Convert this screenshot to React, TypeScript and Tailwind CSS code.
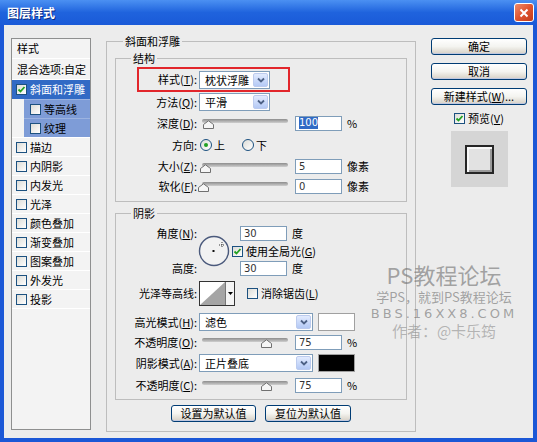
import React from 'react';

const cjk = "font-['Noto_Sans_CJK_SC','Noto_Sans',sans-serif]";
const latin = "font-['DejaVu_Sans','Liberation_Sans',sans-serif]";

function Acc({ text, k, colon = true }: { text: string; k?: string; colon?: boolean }) {
  return (
    <span className="whitespace-nowrap">
      {text}
      {k && (
        <>
          (<span className="underline">{k}</span>)
        </>
      )}
      {colon && ':'}
    </span>
  );
}

function Label({ text, k, w = 'w-[82px]' }: { text: string; k?: string; w?: string }) {
  return (
    <div className={`${w} shrink-0 text-right pr-[1px]`}>
      <Acc text={text} k={k} />
    </div>
  );
}

function Select({ value, w }: { value: string; w: string }) {
  return (
    <div className={`${w} ml-[1px] h-[18px] shrink-0 flex items-stretch border border-[#7f9db9] bg-white`}>
      <span className="flex-1 pl-[5px] leading-[16px]">{value}</span>
      <span className="w-[15px] m-[1px] flex items-center justify-center rounded-[2px] border border-[#bccbee] bg-gradient-to-b from-[#e2ebfe] to-[#b4c9f5]">
        <svg width="8" height="6" viewBox="0 0 8 6">
          <path d="M1 1.5 L4 4.5 L7 1.5" stroke="#4d6185" strokeWidth="1.8" fill="none" />
        </svg>
      </span>
    </div>
  );
}

function Slider({ pos }: { pos: number }) {
  return (
    <div className="relative w-[91px] h-[14px] ml-[1px] shrink-0">
      <div className="absolute left-[3px] right-[2px] top-[3px] h-[4px] rounded-full bg-gradient-to-b from-[#8d8d8d] to-[#cfcfcf]" />
      <svg className="absolute top-[4px]" style={{ left: pos }} width="11" height="9" viewBox="0 0 11 9">
        <path d="M0.5 8.5 V4.5 L5.5 0.8 L10.5 4.5 V8.5 Z" fill="#f6f6f6" stroke="#707070" />
      </svg>
    </div>
  );
}

function NumInput({ value, selected }: { value: string; selected?: boolean }) {
  return (
    <div className={`w-[47px] h-[15px] ml-[5px] shrink-0 border border-[#7f9db9] bg-white pl-[3px] flex items-center text-[10px] text-[#333] ${latin}`}>
      {selected ? <span className="bg-[#316ac5] text-white leading-[12px]">{value}</span> : value}
    </div>
  );
}

function Checkbox({ checked }: { checked?: boolean }) {
  return (
    <span className="w-[11px] h-[11px] shrink-0 border border-[#1c5180] bg-gradient-to-br from-[#dcdcd7] to-white flex items-center justify-center">
      {checked && (
        <svg width="9" height="9" viewBox="0 0 9 9">
          <path d="M1.5 4.5 L3.5 6.5 L7.5 2" stroke="#21a121" strokeWidth="1.8" fill="none" />
        </svg>
      )}
    </span>
  );
}

function Radio({ checked }: { checked?: boolean }) {
  return (
    <span className="w-[12px] h-[12px] shrink-0 rounded-full border border-[#1c5180] bg-gradient-to-br from-[#dcdcd7] to-white flex items-center justify-center">
      {checked && <span className="w-[4px] h-[4px] rounded-full bg-[#21a121]" />}
    </span>
  );
}

function Button({ children, w }: { children: React.ReactNode; w: string }) {
  return (
    <div className={`${w} h-[17px] shrink-0 flex items-center justify-center rounded-[3px] border border-[#003c74] bg-gradient-to-b from-white via-[#f4f4f0] to-[#d6d0c5] shadow-[inset_0_-1px_0_#c0c8e0] leading-none`}>
      {children}
    </div>
  );
}

const effects = ['描边', '内阴影', '内发光', '光泽', '颜色叠加', '渐变叠加', '图案叠加', '外发光', '投影'];

function StylePanel() {
  return (
    <div className="ml-[7px] mt-[13px] w-[80px] h-[392px] shrink-0 border border-[#8e8f8f] bg-[#f3f3f3]">
      <div className="h-[20px] pl-[5px] flex items-center border-b border-white">样式</div>
      <div className="h-[21px] pl-[5px] flex items-center border-b border-white">混合选项:自定</div>
      <div className="h-[19px] pl-[4px] flex items-center gap-[3px] bg-[#316ac5] text-white">
        <Checkbox checked />
        斜面和浮雕
      </div>
      {['等高线', '纹理'].map((t) => (
        <div key={t} className="h-[19px] ml-[12px] pl-[6px] flex items-center gap-[3px] bg-[#7e9cd7] border-t border-[#9cb3e0]">
          <Checkbox />
          {t}
        </div>
      ))}
      {effects.map((t) => (
        <div key={t} className="h-[19px] pl-[4px] flex items-center gap-[3px] border-t border-white">
          <Checkbox />
          {t}
        </div>
      ))}
      <div className="border-t border-white" />
    </div>
  );
}

function Unit({ children }: { children: React.ReactNode }) {
  return <span className="ml-[5px]">{children}</span>;
}

function BevelPanel() {
  return (
    <fieldset className="ml-[15px] mt-[8px] w-[310px] shrink-0 border border-[#bdbdbd] px-[8px] pb-[9px] self-start">
      <legend className="ml-[8px] px-[2px] leading-[16px]">斜面和浮雕</legend>

      <fieldset className="mt-[1px] border border-[#bdbdbd] pb-[6px]">
        <legend className="ml-[15px] px-[2px] leading-[16px]">结构</legend>
        <div className="mt-[1px] ml-[21px] w-[153px] h-[25px] border-2 border-[#e2262b] flex items-center">
          <Label text="样式" k="T" w="w-[59px]" />
          <Select value="枕状浮雕" w="w-[71px]" />
        </div>
        <div className="h-[20px] flex items-center">
          <Label text="方法" k="Q" />
          <Select value="平滑" w="w-[71px]" />
        </div>
        <div className="h-[22px] flex items-center">
          <Label text="深度" k="D" />
          <Slider pos={4} />
          <NumInput value="100" selected />
          <Unit>%</Unit>
        </div>
        <div className="h-[22px] flex items-center">
          <Label text="方向" />
          <span className="ml-[2px] flex items-center gap-[2px]">
            <Radio checked />上
          </span>
          <span className="ml-[17px] flex items-center gap-[2px]">
            <Radio />下
          </span>
        </div>
        <div className="h-[21px] flex items-center">
          <Label text="大小" k="Z" />
          <Slider pos={1} />
          <NumInput value="5" />
          <Unit>像素</Unit>
        </div>
        <div className="h-[18px] flex items-center">
          <Label text="软化" k="F" />
          <Slider pos={-1} />
          <NumInput value="0" />
          <Unit>像素</Unit>
        </div>
      </fieldset>

      <fieldset className="mt-[3px] border border-[#bdbdbd] pb-[6px]">
        <legend className="ml-[15px] px-[2px] leading-[16px]">阴影</legend>
        <div className="mt-[5px] flex items-center">
          <div className="w-[82px] h-[50px] shrink-0 flex flex-col justify-between text-right pr-[1px]">
            <div className="leading-[15px]">
              <Acc text="角度" k="N" />
            </div>
            <div className="leading-[15px]">高度:</div>
          </div>
          <svg width="32" height="32" viewBox="0 0 32 32" className="shrink-0">
            <circle cx="16" cy="16" r="14.5" fill="#f2f2f2" stroke="#4b5a7c" strokeWidth="1.4" />
            <rect x="14.5" y="15" width="2" height="2" fill="#111" />
            <path d="M24 7 V13 M21 10 H27" stroke="#222" strokeWidth="0.9" strokeDasharray="1 1" />
          </svg>
          <div className="ml-[5px] flex flex-col">
            <div className="h-[15px] flex items-center">
              <NumInput value="30" />
              <Unit>度</Unit>
            </div>
            <div className="mt-[3px] h-[15px] flex items-center gap-[3px] -ml-[3px]">
              <Checkbox checked />
              <Acc text="使用全局光" k="G" colon={false} />
            </div>
            <div className="mt-[2px] h-[15px] flex items-center">
              <NumInput value="30" />
              <Unit>度</Unit>
            </div>
          </div>
        </div>
        <div className="mt-[5px] h-[25px] flex items-center">
          <Label text="光泽等高线" />
          <div className="ml-[1px] w-[36px] h-[25px] shrink-0 border border-[#333] bg-white flex">
            <svg width="25" height="23" viewBox="0 0 25 23" className="shrink-0">
              <polygon points="0,23 25,0 25,23" fill="#a5a5a5" />
            </svg>
            <div className="flex-1 border-l border-[#777] bg-[#f4f4f4] flex items-center justify-center">
              <svg width="5" height="3" viewBox="0 0 5 3">
                <polygon points="0,0 5,0 2.5,3" fill="#000" />
              </svg>
            </div>
          </div>
          <span className="ml-[12px] flex items-center gap-[3px]">
            <Checkbox />
            <Acc text="消除锯齿" k="L" colon={false} />
          </span>
        </div>
        <div className="mt-[7px] h-[18px] flex items-center">
          <Label text="高光模式" k="H" />
          <Select value="滤色" w="w-[114px]" />
          <div className="ml-[5px] w-[37px] h-[18px] border border-[#a0a0a0] bg-white" />
        </div>
        <div className="mt-[3px] h-[16px] flex items-center">
          <Label text="不透明度" k="O" />
          <Slider pos={62} />
          <NumInput value="75" />
          <Unit>%</Unit>
        </div>
        <div className="mt-[4px] h-[18px] flex items-center">
          <Label text="阴影模式" k="A" />
          <Select value="正片叠底" w="w-[114px]" />
          <div className="ml-[5px] w-[37px] h-[18px] border border-[#a0a0a0] bg-black" />
        </div>
        <div className="mt-[5px] h-[16px] flex items-center">
          <Label text="不透明度" k="C" />
          <Slider pos={62} />
          <NumInput value="75" />
          <Unit>%</Unit>
        </div>
      </fieldset>

      <div className="mt-[5px] flex justify-center gap-[9px]">
        <Button w="w-[85px]">设置为默认值</Button>
        <Button w="w-[86px]">复位为默认值</Button>
      </div>
    </fieldset>
  );
}

function ActionColumn() {
  return (
    <div className="ml-[15px] mt-[13px] w-[96px] shrink-0 flex flex-col items-center">
      <Button w="w-[96px]">确定</Button>
      <div className="mt-[8px]">
        <Button w="w-[96px]">取消</Button>
      </div>
      <div className="mt-[8px]">
        <Button w="w-[96px]">
          <Acc text="新建样式" k="W" colon={false} />
          ...
        </Button>
      </div>
      <div className="mt-[5px] h-[16px] flex items-center gap-[3px]">
        <Checkbox checked />
        <Acc text="预览" k="V" colon={false} />
      </div>
      <div className="mt-[5px] w-[57px] h-[56px] bg-[#d5d5d5] flex items-center justify-center">
        <div className="w-[29px] h-[29px] border-2 border-[#262626] bg-[#e2e2e2] shadow-[inset_2px_2px_0_#f8f8f8,inset_-2px_-2px_0_#9a9a9a]" />
      </div>
    </div>
  );
}

export default function App() {
  return (
    <div className={`relative w-[537px] h-[442px] flex flex-col overflow-hidden bg-[#1b57d6] text-[11px] text-black ${cjk}`}>
      <div className="h-[25px] shrink-0 flex items-center justify-between pl-[7px] pr-[3px] bg-gradient-to-b from-[#4b90f2] via-[#1f63dd] to-[#1a5ad8]">
        <span className="text-white text-[12px] font-bold [text-shadow:1px_1px_0_#0a2a80]">图层样式</span>
        <span className="w-[20px] h-[19px] rounded-[3px] border border-white bg-gradient-to-br from-[#ee8a6a] via-[#df5430] to-[#c23b17] flex items-center justify-center">
          <svg width="10" height="10" viewBox="0 0 10 10">
            <path d="M1.5 1.5 L8.5 8.5 M8.5 1.5 L1.5 8.5" stroke="#fff" strokeWidth="2" />
          </svg>
        </span>
      </div>
      <div className="flex-1 mx-[4px] mb-[4px] flex bg-[#ececec]">
        <StylePanel />
        <BevelPanel />
        <ActionColumn />
      </div>
      <div className="absolute left-[374px] top-[262px] w-[140px] flex flex-col items-center pointer-events-none text-[#6e6e6e]/60">
        <span className="text-[22px] leading-[24px]">PS教程论坛</span>
        <span className="mt-[3px] text-[13px] leading-[15px]">学PS，就到PS教程论坛</span>
        <span className={`mt-[2px] text-[13px] leading-[15px] tracking-[3px] ${latin}`}>BBS.16XX8.COM</span>
        <span className="text-[15px] leading-[20px] text-[#8c8c8c]/60">作者：@卡乐筠</span>
      </div>
    </div>
  );
}
